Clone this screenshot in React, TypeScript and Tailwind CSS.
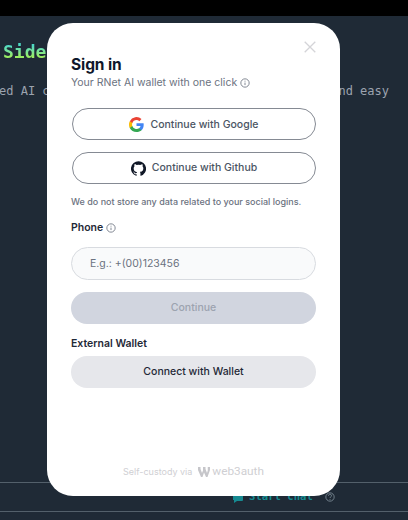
import React from 'react';

function InfoIcon({ className }: { className: string }) {
  return (
    <svg className={className} viewBox="0 0 24 24" fill="none" stroke="currentColor" strokeWidth="2">
      <circle cx="12" cy="12" r="10" />
      <path d="M12 11v6M12 6.500v2.200" />
    </svg>
  );
}

function GoogleIcon() {
  return (
    <svg className="h-[15px] w-[15px] shrink-0" viewBox="0 0 24 24">
      <path fill="#4285F4" d="M23.5 12.3c0-.8-.1-1.6-.2-2.3H12v4.5h6.5a5.6 5.6 0 0 1-2.4 3.6v3h3.9c2.200-2.100 3.500-5.100 3.500-8.800z" />
      <path fill="#34A853" d="M12 24c3.200 0 6-1.100 8-2.900l-3.900-3a7.200 7.200 0 0 1-10.800-3.800h-4v3.100A12 12 0 0 0 12 24z" />
      <path fill="#FBBC05" d="M5.300 14.300a7.200 7.200 0 0 1 0-4.600V6.600h-4a12 12 0 0 0 0 10.800z" />
      <path fill="#EA4335" d="M12 4.800c1.800 0 3.300.6 4.600 1.800L20 3.200A12 12 0 0 0 1.300 6.600l4 3.100A7.200 7.200 0 0 1 12 4.800z" />
    </svg>
  );
}

function GithubIcon() {
  return (
    <svg className="h-[15px] w-[15px] shrink-0" viewBox="0 0 24 24" fill="#111827">
      <path d="M12 .3a12 12 0 0 0-3.800 23.400c.6.1.8-.3.8-.6v-2c-3.300.7-4-1.600-4-1.600-.6-1.400-1.400-1.800-1.400-1.800-1-.7.1-.7.1-.7 1.200 0 1.900 1.200 1.900 1.200 1 1.800 2.800 1.300 3.500 1 0-.8.400-1.300.7-1.600-2.700-.3-5.500-1.300-5.500-6 0-1.200.5-2.300 1.300-3.100-.2-.4-.6-1.600 0-3.200 0 0 1-.3 3.400 1.200a11.500 11.500 0 0 1 6 0c2.300-1.500 3.300-1.200 3.300-1.200.7 1.600.3 2.800.1 3.200.8.800 1.300 1.900 1.300 3.200 0 4.600-2.800 5.600-5.500 5.900.5.400.9 1 .9 2.200v3.300c0 .3.100.7.800.6A12 12 0 0 0 12 .3" />
    </svg>
  );
}

function SignInModal() {
  return (
    <div className="absolute left-[47px] top-[23px] flex h-[473px] w-[293px] flex-col rounded-[26px] bg-white px-6 font-['Inter',sans-serif]">
      <div className="flex h-8 items-end justify-end">
        <svg className="mb-0.5 h-3 w-3 text-[#d4d4d8]" viewBox="0 0 12 12" fill="none" stroke="currentColor" strokeWidth="1.300">
          <path d="M.7.7l10.600 10.600M11.300.7L.7 11.300" />
        </svg>
      </div>
      <h1 className="mt-0.5 text-[15.500px] font-bold leading-4 tracking-[-0.1px] text-[#0f172a]">Sign in</h1>
      <p className="mt-0.5 flex h-4 items-center whitespace-nowrap text-[10.500px] leading-4 text-[#6b7280]">
        Your RNet AI wallet with one click
        <InfoIcon className="ml-[3px] h-2.5 w-2.5" />
      </p>
      <button className="ml-px mt-[17px] flex h-8 shrink-0 items-center justify-center gap-1.5 rounded-full border border-[#858a93] pt-px text-[10.500px] font-medium text-[#4b5563]">
        <GoogleIcon />
        Continue with Google
      </button>
      <button className="ml-px mt-3 flex h-8 shrink-0 items-center justify-center gap-1.5 rounded-full border border-[#858a93] text-[10.500px] font-medium text-[#4b5563]">
        <GithubIcon />
        Continue with Github
      </button>
      <p className="mt-[11px] h-3.5 whitespace-nowrap text-[9px] font-medium leading-3.5 text-[#6b7280]">
        We do not store any data related to your social logins.
      </p>
      <div className="mt-3 flex h-3.5 items-center text-[10.500px] font-semibold text-[#1f2937]">
        Phone
        <InfoIcon className="ml-[3px] h-2.5 w-2.5 text-[#6b7280]" />
      </div>
      <input
        className="mt-3 h-[33px] shrink-0 rounded-full border border-[#d8dbe0] bg-[#f9fafb] px-[18px] text-[10.500px] text-[#6b7280] placeholder:text-[#6b7280]"
        placeholder="E.g.: +(00)123456"
      />
      <button className="mt-3 h-8 shrink-0 rounded-full bg-[#d1d5df] text-[10.500px] font-medium text-[#9ca3af]">Continue</button>
      <h2 className="mt-3 h-4 text-[10.500px] font-semibold leading-4 text-[#1f2937]">External Wallet</h2>
      <button className="mt-1 h-8 shrink-0 rounded-full bg-[#e6e7eb] text-[10.500px] font-medium text-[#1f2937]">Connect with Wallet</button>
      <footer className="mb-4 mt-auto flex h-4 items-center justify-center whitespace-nowrap text-[#cfcfd3]">
        <span className="text-[9px]">Self-custody via</span>
        <svg className="ml-1.5 h-[10px] w-3 text-[#c6c6ca]" viewBox="0 0 24 20" fill="currentColor">
          <path d="M0 0h5v4l3 8 2-5V0h5v4l3 8 1.500-5V0H24v6l-5 14h-3l-4-9-3 9H6L0 6z" />
        </svg>
        <span className="ml-0.5 font-['Roboto',sans-serif] text-[11.800px]">web3auth</span>
      </footer>
    </div>
  );
}

export default function App() {
  return (
    <div className="relative flex h-[520px] w-[408px] flex-col overflow-hidden bg-[#1f2a36] font-['DejaVu_Sans_Mono',monospace]">
      <div className="h-4 shrink-0 bg-black" />
      <div className="mt-[25px] h-[22px] pl-[3px]">
        <span className="block w-11 bg-gradient-to-b from-[#4ed9c5] from-20% to-[#98ed63] to-70% bg-clip-text text-[18px] font-bold leading-[22px] text-transparent">Side</span>
      </div>
      <div className="mt-5 flex h-4 justify-between whitespace-pre pr-[19px] text-[12px] leading-4 text-[#9ca3af]">
        <span className="-ml-px">ed AI c</span>
        <span>nd easy</span>
      </div>
      <div className="mt-auto flex h-[30px] shrink-0 items-center border-y border-[#53606b] pl-[232px]">
        <svg className="h-3 w-3 text-[#168a91]" viewBox="0 0 12 12" fill="currentColor">
          <path d="M3 1h7q1 0 1 1v7q0 1-1 1H5l-3 2V9H1V4h2z" />
        </svg>
        <span className="ml-[5px] text-[10.600px] font-bold text-[#168a91]">Start chat</span>
        <svg className="ml-3 h-2.5 w-2.5 text-[#81909b]" viewBox="0 0 24 24" fill="none" stroke="currentColor" strokeWidth="2">
          <circle cx="12" cy="12" r="10" />
          <path d="M8.500 9a3.500 3.500 0 1 1 5 3q-1.500.7-1.500 2.500M12 17v2" />
        </svg>
      </div>
      <div className="h-2 shrink-0" />
      <SignInModal />
    </div>
  );
}
